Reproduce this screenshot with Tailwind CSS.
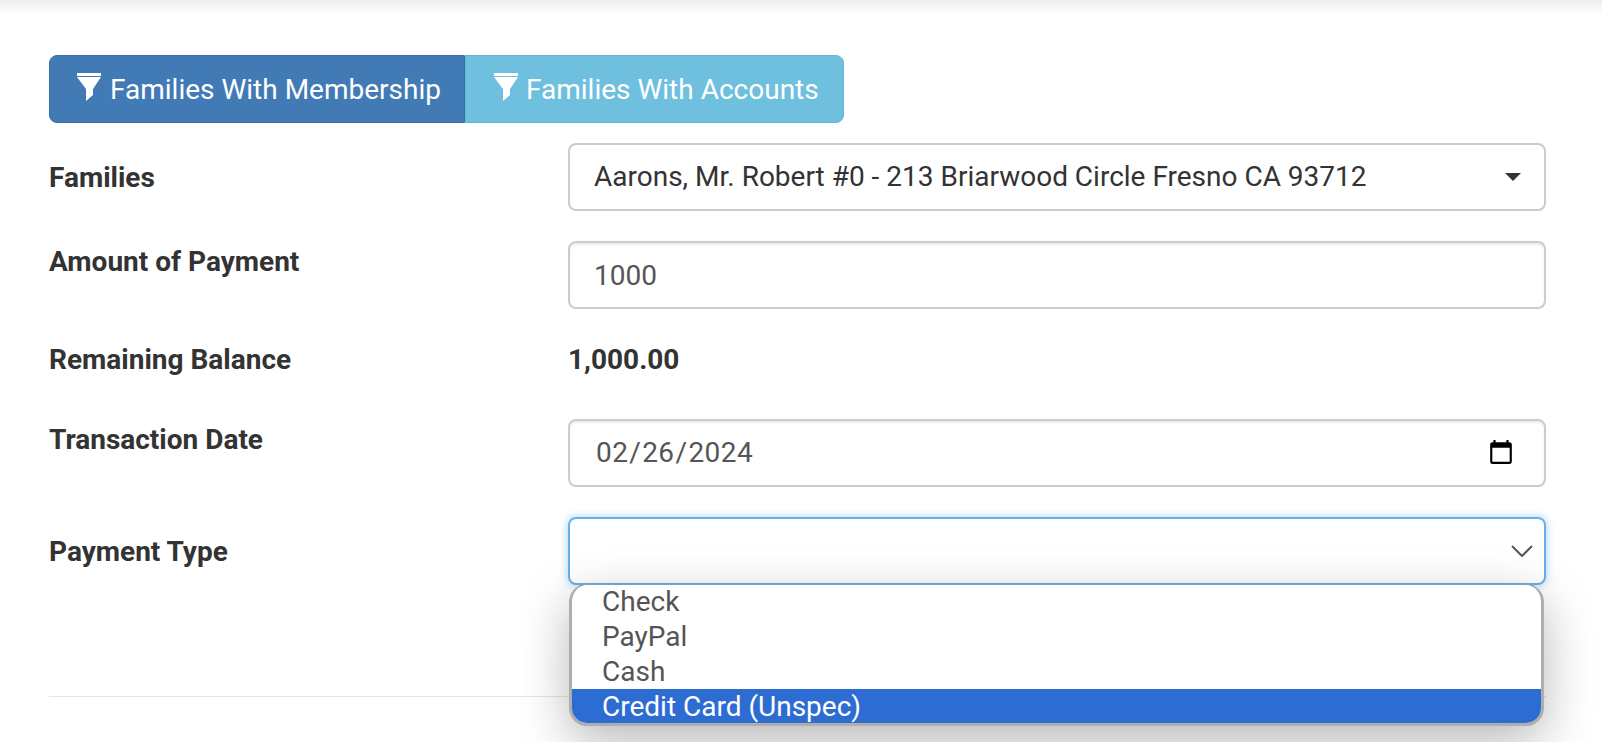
<!DOCTYPE html>
<html lang="en">
<head>
  <meta charset="UTF-8">
  <title>Make Payment</title>
  <script src="https://cdn.jsdelivr.net/npm/@tailwindcss/browser@4"></script>
</head>
<body class="relative h-[742px] overflow-hidden bg-white font-['Roboto',sans-serif] text-[28px] text-[#333]">

  <div class="h-[14px] bg-gradient-to-b from-[#eeeeee] to-white"></div>

  <main class="pl-[49px] pr-[56px] pt-[41px]">
    <!-- filter buttons -->
    <div class="flex h-[68px] w-[795px] text-white">
      <button class="flex w-[416px] items-center gap-[9px] rounded-l-[8px] border border-[#3a6ea5] bg-[#417ab5] pl-[27px]">
        <svg class="mb-[4px] h-[28px] w-[24px]" viewBox="0 0 24 28" fill="#fff"><path d="M0 0h24v3H0z"/><path d="M0 4H24L16 16V22L9 28V16z"/></svg>
        <span class="pt-[2px]">Families With Membership</span>
      </button>
      <button class="flex w-[379px] items-center gap-[8px] rounded-r-[8px] border border-[#5fb8da] bg-[#6fbfde] pl-[28px]">
        <svg class="mb-[4px] h-[28px] w-[24px]" viewBox="0 0 24 28" fill="#fff"><path d="M0 0h24v3H0z"/><path d="M0 4H24L16 16V22L9 28V16z"/></svg>
        <span class="pt-[2px]">Families With Accounts</span>
      </button>
    </div>

    <div class="mt-[20px] grid grid-cols-[519px_978px]">
      <label class="self-center pt-[2px] font-bold">Families</label>
      <div class="flex h-[68px] items-center justify-between rounded-[8px] border-2 border-[#ccc] pl-[24px] pr-[23px]">
        <span>Aarons, Mr. Robert #0 - 213 Briarwood Circle Fresno CA 93712</span>
        <svg class="h-[8px] w-[16px]" viewBox="0 0 16 8" fill="#333"><path d="M0 0h16L8 8z"/></svg>
      </div>
    </div>

    <div class="mt-[30px] grid grid-cols-[519px_978px]">
      <label class="font-bold">Amount of Payment</label>
      <input type="text" value="1000" class="h-[68px] rounded-[8px] border-2 border-[#ccc] pl-[24px] text-[#555] shadow-[inset_0_2px_2px_rgba(0,0,0,0.075)] outline-none">
    </div>

    <div class="mt-[30px] grid h-[36px] grid-cols-[519px_978px] items-center font-bold">
      <label>Remaining Balance</label>
      <span>1,000.00</span>
    </div>

    <div class="mt-[44px] grid grid-cols-[519px_978px]">
      <label class="font-bold">Transaction Date</label>
      <input type="date" value="2024-02-26" class="h-[68px] rounded-[8px] border-2 border-[#ccc] pl-[25px] pr-[27px] tracking-[0.4px] text-[#555] shadow-[inset_0_2px_2px_rgba(0,0,0,0.075)] outline-none">
    </div>

    <div class="mt-[30px] grid grid-cols-[519px_978px]">
      <label class="self-center pt-[2px] font-bold">Payment Type</label>
      <div class="flex h-[68px] items-center justify-end rounded-[8px] border-2 border-[#66afe9] pr-[11px] shadow-[0_0_8px_rgba(102,175,233,0.6)]">
        <svg class="h-[12px] w-[22px]" viewBox="0 0 22 12" fill="none" stroke="#555" stroke-width="2"><path d="M1 1l10 10L21 1"/></svg>
      </div>
    </div>

    <hr class="mt-[111px] border-t border-[#e5e5e5]">
  </main>

  <!-- open select list -->
  <ul class="absolute left-[569px] top-[584px] w-[975px] overflow-hidden rounded-[18px] border-[3px] border-t border-[#aeaeae] border-t-[#7f9fbd] bg-white pt-[3px] leading-[35px] text-[#555] shadow-[0_16px_50px_rgba(0,0,0,0.28)]">
    <li class="h-[31px] pl-[30px] leading-[28px]">Check</li>
    <li class="h-[35px] pl-[30px]">PayPal</li>
    <li class="h-[35px] pl-[30px]">Cash</li>
    <li class="h-[34px] bg-[#2d6cd2] pl-[30px] text-white">Credit Card (Unspec)</li>
  </ul>

</body>
</html>
